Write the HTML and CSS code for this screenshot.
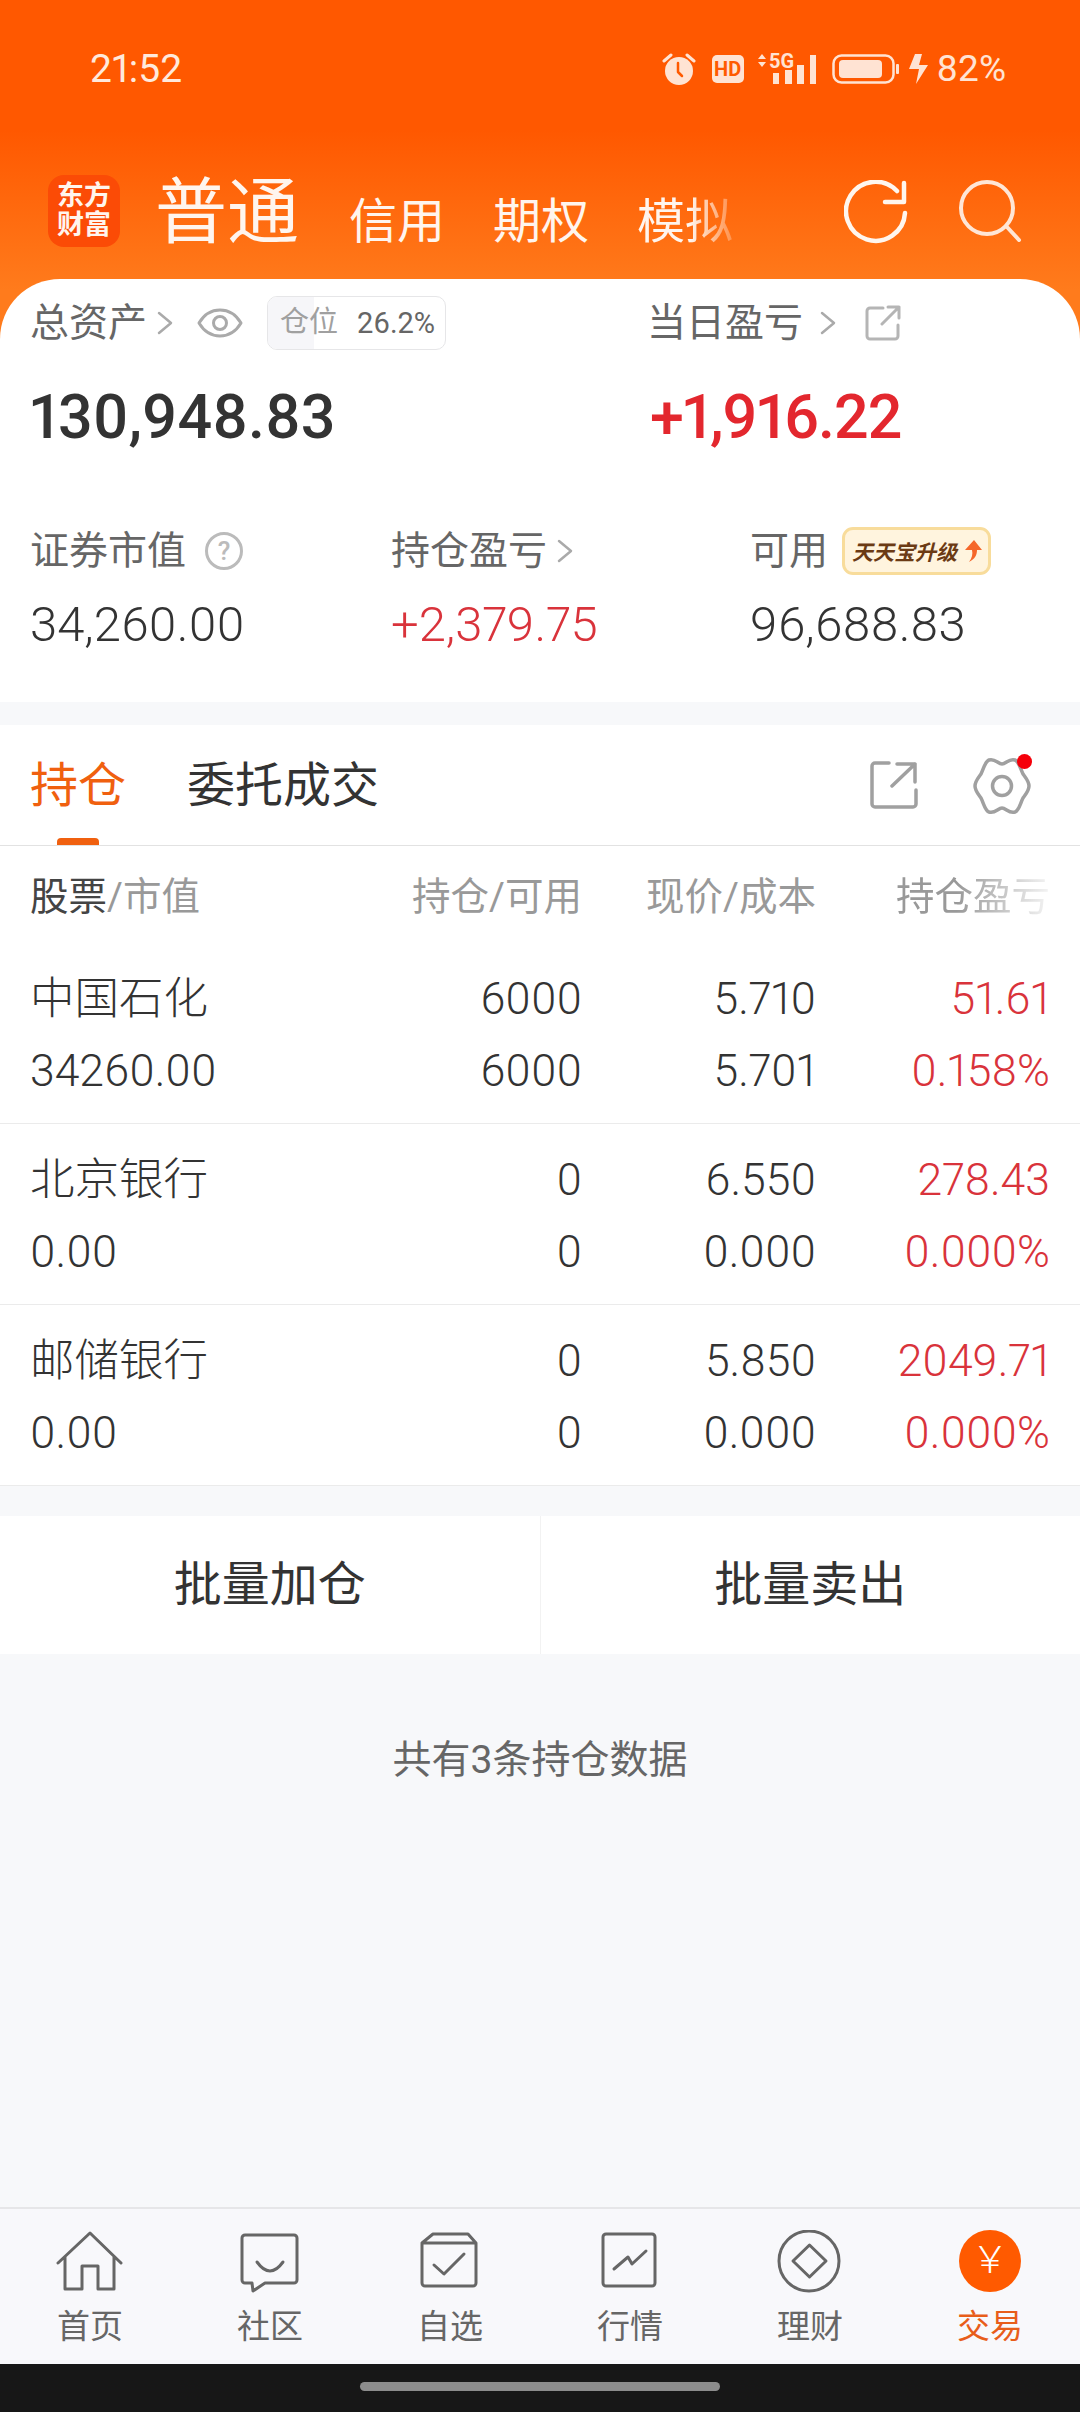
FILE: index.html
```html
<!DOCTYPE html>
<html lang="zh-CN">
<head>
    <meta charset="UTF-8">
    <title>交易</title>
    <link rel="stylesheet" href="styles.css">
</head>
<body>
<div class="page">
    <div class="top">
        <div class="status">
            <span class="clock">21:52</span>
            <div class="status-right">
                <svg class="ic-alarm" width="34" height="34" viewBox="0 0 34 34"><circle cx="17" cy="19" r="14" fill="#ffe3d3"/><path d="M16 11v9l4 4" fill="none" stroke="#ff5a00" stroke-width="2.5"/><path d="M2 9l7-6M32 9l-7-6" stroke="#ffe3d3" stroke-width="3"/></svg>
                <span class="hd">HD</span>
                <svg class="ic-signal" width="60" height="40" viewBox="0 -4 60 40"><path d="M1 6l4-5 4 5zM1 9l4 5 4-5z" fill="#ffe3d3"/><text x="12" y="15" class="five-g">5G</text><path d="M16 20h6v11h-6zM28 17h7v14h-7zM40 12h7v19h-7zM53 2h6v29h-6z" fill="#ffe3d3"/></svg>
                <svg class="ic-battery" width="67" height="30" viewBox="0 0 67 30"><rect x="1.5" y="1.5" width="60" height="27" rx="8" fill="none" stroke="#ffe3d3" stroke-width="2.5"/><rect x="7" y="6" width="43" height="18" rx="4" fill="#ffe3d3"/><rect x="64" y="10" width="3" height="10" rx="1" fill="#ffe3d3"/></svg>
                <svg class="ic-bolt" width="20" height="30" viewBox="0 0 20 30"><path d="M7 0h7l-3 11h9L8 30l3-15H1z" fill="#ffe3d3"/></svg>
                <span class="pct">82%</span>
            </div>
        </div>

        <div class="nav">
            <div class="logo">东方<br>财富</div>
            <span class="nav-main">普通</span>
            <span class="nav-item">信用</span>
            <span class="nav-item">期权</span>
            <span class="nav-item nav-fade">模拟</span>
            <svg class="ic-refresh" width="64" height="64" viewBox="0 0 64 64"><path d="M61 33A29.5 29.5 0 1 1 53 11" fill="none" stroke="#fff6ee" stroke-width="4.5"/><path d="M60 3V22H41" fill="none" stroke="#fff6ee" stroke-width="4.5"/></svg>
            <svg class="ic-search" width="64" height="64" viewBox="0 0 64 64"><circle cx="29" cy="30" r="26" fill="none" stroke="#ffe6d6" stroke-width="4"/><path d="M49 49l12 13" stroke="#ffe6d6" stroke-width="4"/></svg>
        </div>

        <div class="card">
            <div class="card-top">
                <div>
                    <div class="label-row">
                        <span class="label">总资产</span>
                        <svg class="chev" width="18" height="24" viewBox="0 0 18 24"><path d="M3 2l12 10L3 22" fill="none" stroke="#aaa" stroke-width="2.5"/></svg>
                        <svg class="ic-eye" width="46" height="30" viewBox="0 0 46 30"><path d="M2 15C8 5 15 2 23 2s15 3 21 13c-6 10-13 13-21 13S8 25 2 15z" fill="none" stroke="#aaa" stroke-width="3"/><circle cx="23" cy="15" r="6.5" fill="none" stroke="#aaa" stroke-width="3"/></svg>
                        <div class="ratio"><span class="ratio-name">仓位</span><span class="ratio-val">26.2%</span></div>
                    </div>
                    <div class="big">130,948.83</div>
                </div>
                <div>
                    <div class="label-row">
                        <span class="label">当日盈亏</span>
                        <svg class="chev chev-far" width="18" height="24" viewBox="0 0 18 24"><path d="M3 2l12 10L3 22" fill="none" stroke="#aaa" stroke-width="2.5"/></svg>
                        <svg class="ic-share" width="36" height="36" viewBox="0 0 36 36"><path d="M18 3H5a3 3 0 0 0-3 3V31a3 3 0 0 0 3 3H30a3 3 0 0 0 3-3V20M17 19L34 2M23 2H34V13" fill="none" stroke="#b5b5b5" stroke-width="3"/></svg>
                    </div>
                    <div class="big up">+1,916.22</div>
                </div>
            </div>
            <div class="card-bottom">
                <div>
                    <div class="label-row short">
                        <span class="label">证券市值</span>
                        <span class="help">?</span>
                    </div>
                    <div class="mid">34,260.00</div>
                </div>
                <div>
                    <div class="label-row short">
                        <span class="label">持仓盈亏</span>
                        <svg class="chev" width="18" height="24" viewBox="0 0 18 24"><path d="M3 2l12 10L3 22" fill="none" stroke="#aaa" stroke-width="2.5"/></svg>
                    </div>
                    <div class="mid red">+2,379.75</div>
                </div>
                <div>
                    <div class="label-row short">
                        <span class="label">可用</span>
                        <div class="upgrade">天天宝升级<svg width="20" height="22" viewBox="0 0 20 22"><path d="M12 0l8 10h-5c0 5-2 9-8 12 3-4 4-8 3-12H3z" fill="#f5672a"/></svg></div>
                    </div>
                    <div class="mid">96,688.83</div>
                </div>
            </div>
        </div>
    </div>

    <div class="main">
        <div class="tabs">
            <div class="tab active">持仓</div>
            <div class="tab">委托成交</div>
            <svg class="ic-export" width="48" height="48" viewBox="0 0 48 48"><path d="M19 2H5a3 3 0 0 0-3 3V43a3 3 0 0 0 3 3H43a3 3 0 0 0 3-3V29M22 25L45 3M27 3H45V21" fill="none" stroke="#a0a0a0" stroke-width="3.5"/></svg>
            <div class="gear">
                <svg width="60" height="60" viewBox="0 0 60 60"><path d="M30 8C34 8 37 2 43 4C47 5.500 48 12 51 18C53 21 57 25 57 30C57 35 53 39 51 42C48 48 47 54.500 43 56C37 58 34 52 30 52C26 52 23 58 17 56C13 54.500 12 48 9 42C7 39 3 35 3 30C3 25 7 21 9 18C12 12 13 5.500 17 4C23 2 26 8 30 8Z" fill="none" stroke="#a0a0a0" stroke-width="3.5"/><circle cx="30" cy="30" r="9.500" fill="none" stroke="#a0a0a0" stroke-width="3.5"/></svg>
                <span class="dot"></span>
            </div>
        </div>

        <div class="table">
            <div class="grid head">
                <span><b>股票</b>/市值</span>
                <span>持仓/可用</span>
                <span>现价/成本</span>
                <span class="head-fade">持仓盈亏</span>
            </div>
            <div class="grid row">
                <span class="name">中国石化</span><span>6000</span><span>5.710</span><span class="red">51.61</span>
                <span>34260.00</span><span>6000</span><span>5.701</span><span class="red">0.158%</span>
            </div>
            <div class="grid row">
                <span class="name">北京银行</span><span>0</span><span>6.550</span><span class="red">278.43</span>
                <span>0.00</span><span>0</span><span>0.000</span><span class="red">0.000%</span>
            </div>
            <div class="grid row">
                <span class="name">邮储银行</span><span>0</span><span>5.850</span><span class="red">2049.71</span>
                <span>0.00</span><span>0</span><span>0.000</span><span class="red">0.000%</span>
            </div>
        </div>

        <div class="batch">
            <div class="batch-btn">批量加仓</div>
            <div class="batch-btn">批量卖出</div>
        </div>

        <p class="total">共有3条持仓数据</p>
    </div>

    <div class="tabbar">
        <div class="tb-item">
            <svg width="72" height="66" viewBox="0 0 72 66"><path d="M4 33L36 3l31 30M11 27V59H28V36H44V59H60V27" fill="none" stroke="#666" stroke-width="3"/></svg>
            <span>首页</span>
        </div>
        <div class="tb-item">
            <svg width="72" height="66" viewBox="0 0 72 66"><path d="M11 5H60a3 3 0 0 1 3 3V50a3 3 0 0 1-3 3H31l-12 8-1-8H11a3 3 0 0 1-3-3V8a3 3 0 0 1 3-3z" fill="none" stroke="#666" stroke-width="3"/><path d="M23 32Q36 50 49 32" fill="none" stroke="#666" stroke-width="3"/></svg>
            <span>社区</span>
        </div>
        <div class="tb-item">
            <svg width="72" height="66" viewBox="0 0 72 66"><path d="M8 13L19 4H54L62 13M8 13H62V53a3 3 0 0 1-3 3H11a3 3 0 0 1-3-3z" fill="none" stroke="#666" stroke-width="3"/><path d="M20 35l10 9 20-20" fill="none" stroke="#666" stroke-width="3"/></svg>
            <span>自选</span>
        </div>
        <div class="tb-item">
            <svg width="72" height="66" viewBox="0 0 72 66"><rect x="9" y="4" width="52" height="52" rx="3" fill="none" stroke="#666" stroke-width="3"/><path d="M20 39l14-12 4 7 14-13" fill="none" stroke="#666" stroke-width="3"/></svg>
            <span>行情</span>
        </div>
        <div class="tb-item">
            <svg width="72" height="66" viewBox="0 0 72 66"><circle cx="35" cy="31" r="30" fill="none" stroke="#666" stroke-width="3"/><path d="M35.500 15L52 31 35.500 47 19 31z" fill="none" stroke="#666" stroke-width="3"/></svg>
            <span>理财</span>
        </div>
        <div class="tb-item current">
            <div class="yen">￥</div>
            <span>交易</span>
        </div>
    </div>

    <div class="sysbar"><div class="handle"></div></div>
</div>
</body>
</html>
```

FILE: styles.css
```css
* {
    box-sizing: border-box;
}

body {
    margin: 0;
    font-family: Roboto, "Noto Sans CJK SC", sans-serif;
    font-variant-numeric: proportional-nums;
    color: #333;
}

svg {
    stroke-linecap: round;
    stroke-linejoin: round;
}

.page {
    width: 1080px;
    height: 2412px;
    display: flex;
    flex-direction: column;
    background: #f7f8fa;
    overflow: hidden;
}

.red { color: #d9333b; }
.up { color: #e3272e; }

/* orange header */
.top {
    background: linear-gradient(#ff5800 0, #ff5800 130px, #ff7b1c 290px);
}

.status {
    height: 175px;
    padding: 44px 74px 0 90px;
    display: flex;
    justify-content: space-between;
    align-items: flex-start;
    color: #ffe9dc;
}

.clock {
    font-size: 39px;
    line-height: 50px;
}

.status-right {
    display: flex;
    align-items: center;
    height: 50px;
}

.ic-alarm { margin-right: 16px; }

.hd {
    width: 32px;
    height: 28px;
    margin-right: 13px;
    border-radius: 5px;
    background: #ffe3d3;
    color: #ff5a00;
    font-size: 20px;
    font-weight: 700;
    line-height: 28px;
    text-align: center;
}

.ic-signal { margin-right: 15px; }
.five-g { font: 700 20px Roboto, sans-serif; fill: #ffe3d3; }
.ic-bolt { margin: 0 9px; }

.pct {
    font-size: 37px;
    line-height: 50px;
    color: #ffe3d3;
}

.nav {
    height: 104px;
    padding-left: 48px;
    display: flex;
    align-items: flex-start;
    color: #fff5ee;
}

.logo {
    width: 72px;
    height: 72px;
    border-radius: 16px;
    background: #fb4b06;
    font-size: 27px;
    font-weight: 700;
    line-height: 29px;
    padding-top: 7px;
    text-align: center;
}

.nav-main {
    margin-left: 35px;
    font-size: 72px;
    line-height: 76px;
}

.nav-item {
    margin-left: 48px;
    margin-top: 17px;
    font-size: 48px;
    line-height: 60px;
}

.nav-main + .nav-item { margin-left: 50px; }

.nav-fade {
    -webkit-mask-image: linear-gradient(to right, #000 55%, rgba(0, 0, 0, .25) 100%);
    mask-image: linear-gradient(to right, #000 55%, rgba(0, 0, 0, .25) 100%);
}

.ic-refresh { margin-left: auto; margin-top: 5px; }
.ic-search { margin: 3px 58px 0 50px; }

/* asset summary */
.card {
    height: 423px;
    padding: 17px 0 0 30px;
    background: #fff;
    border-radius: 60px 60px 0 0;
}

.card-top {
    display: grid;
    grid-template-columns: 617px 1fr;
}

.card-bottom {
    margin-top: 74px;
    display: grid;
    grid-template-columns: 361px 359px 1fr;
}

.label-row {
    height: 54px;
    display: flex;
    align-items: center;
}

.label-row.short { height: 48px; }

.label {
    font-size: 39px;
    line-height: 48px;
    color: #666;
}

.chev { margin-left: 9px; }
.chev-far { margin-left: 16px; }
.ic-eye { margin-left: 23px; }
.ic-share { margin-left: 28px; }

.ratio {
    width: 179px;
    height: 54px;
    margin-left: 24px;
    display: flex;
    align-items: center;
    border: 1.5px solid #e6e6e8;
    border-radius: 10px;
    overflow: hidden;
    font-size: 29px;
}

.ratio-name {
    width: 46px;
    height: 100%;
    padding-left: 12px;
    background: #f6f6f9;
    color: #a0a0a0;
    line-height: 50px;
    white-space: nowrap;
}

.ratio-val {
    margin-left: 43px;
    color: #666;
}

.big {
    margin-top: 31px;
    font-size: 61px;
    font-weight: 500;
    line-height: 72px;
}

.big.up {
    margin-left: 3px;
    letter-spacing: -1px;
}

.mid {
    margin-top: 20px;
    font-size: 49px;
    font-weight: 300;
    line-height: 60px;
}

.help {
    width: 38px;
    height: 38px;
    margin-left: 19px;
    border: 3px solid #bbb;
    border-radius: 50%;
    color: #bbb;
    font-size: 26px;
    font-weight: 500;
    line-height: 32px;
    text-align: center;
}

.upgrade {
    width: 149px;
    height: 48px;
    margin-left: 14px;
    display: flex;
    align-items: center;
    gap: 5px;
    padding-left: 7px;
    border: 3px solid #f8dc9b;
    border-radius: 11px;
    background: #fff4de;
    color: #6b3a14;
    font-size: 21px;
    font-style: italic;
    font-weight: 700;
    white-space: nowrap;
}

/* position list */
.main {
    flex: 1;
    padding-top: 23px;
}

.tabs {
    height: 121px;
    padding-left: 30px;
    display: flex;
    align-items: flex-start;
    background: #fff;
    border-bottom: 1px solid #e2e2e2;
}

.tab {
    position: relative;
    margin-right: 61px;
    padding-top: 30px;
    font-size: 48px;
    line-height: 62px;
}

.tab.active { color: #f0600f; }

.tab.active::after {
    content: "";
    position: absolute;
    left: 27px;
    top: 113px;
    width: 42px;
    height: 7px;
    border-radius: 4px 4px 0 0;
    background: #f0600f;
}

.ic-export { margin: 36px 0 0 auto; }

.gear {
    position: relative;
    width: 60px;
    height: 60px;
    margin: 31px 48px 0 54px;
}

.dot {
    position: absolute;
    left: 45px;
    top: -2px;
    width: 15px;
    height: 15px;
    border-radius: 50%;
    background: #f5000a;
}

.table {
    background: #fff;
}

.grid {
    display: grid;
    grid-template-columns: 318px 234px 234px 234px;
    align-content: start;
    padding: 0 30px;
    text-align: right;
}

.grid span:nth-child(4n+1) {
    text-align: left;
}

.head {
    height: 97px;
    padding-bottom: 3px;
    align-items: center;
    align-content: center;
    color: #999;
    font-size: 38.5px;
}

.head b {
    color: #444;
    font-weight: 400;
}

.head-fade {
    -webkit-mask-image: linear-gradient(to right, #000 60%, rgba(0, 0, 0, .1) 100%);
    mask-image: linear-gradient(to right, #000 60%, rgba(0, 0, 0, .1) 100%);
}

.row {
    height: 181px;
    padding-top: 20px;
    border-bottom: 1px solid #ebebeb;
    font-size: 44.5px;
    font-weight: 300;
    line-height: 72px;
}

.batch {
    height: 138px;
    margin-top: 30px;
    display: flex;
    background: #fff;
}

.batch-btn {
    flex: 1;
    font-size: 48px;
    line-height: 138px;
    text-align: center;
}

.batch-btn + .batch-btn {
    border-left: 1px solid #f2f2f2;
}

.total {
    margin: 78px 0 0;
    color: #666;
    font-size: 39px;
    line-height: 56px;
    text-align: center;
}

/* bottom tabs */
.tabbar {
    height: 157px;
    display: grid;
    grid-template-columns: repeat(6, 180px);
    padding-top: 21px;
    border-top: 2px solid #e6e6e8;
    background: #f8f8fb;
}

.tb-item {
    display: flex;
    flex-direction: column;
    align-items: center;
    color: #666;
    font-size: 33px;
}

.tb-item span {
    margin-top: 8px;
    line-height: 46px;
}

.tb-item.current { color: #e85d1a; }

.yen {
    width: 62px;
    height: 62px;
    margin-bottom: 4px;
    border-radius: 50%;
    background: #ff5a00;
    color: #fff;
    font-size: 37px;
    font-weight: 300;
    line-height: 62px;
    text-align: center;
}

.sysbar {
    height: 48px;
    padding-top: 18px;
    background: #171717;
}

.handle {
    width: 360px;
    height: 9px;
    margin: 0 auto;
    border-radius: 5px;
    background: #8c8c8c;
}
```
